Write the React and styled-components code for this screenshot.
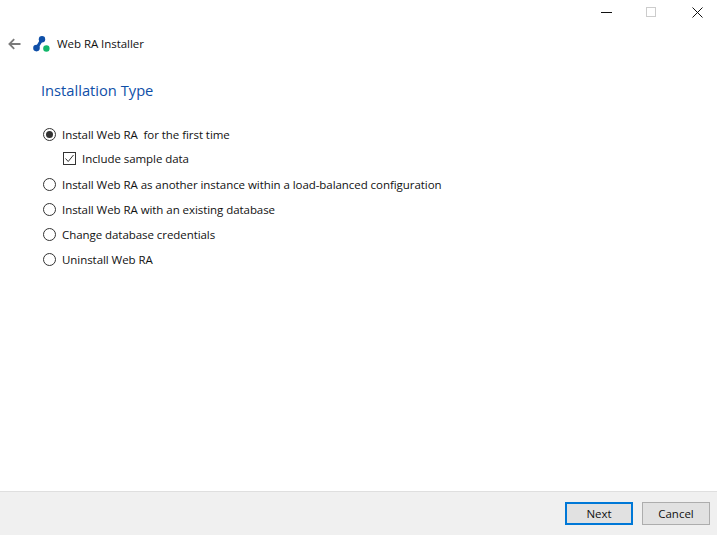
import React from "react";
import styled, { createGlobalStyle } from "styled-components";

const Global = createGlobalStyle`
  html, body { margin: 0; padding: 0; background: #fff; }
  body { font-family: "Open Sans", "Noto Sans", sans-serif; }
`;

const Windowed = styled.div`
  width: 717px; height: 535px; display: flex; flex-direction: column; overflow: hidden;
  background: #fff; color: #111;
`;
const Caption = styled.div`
  height: 25px; display: flex; justify-content: flex-end; align-items: flex-start;
  margin-right: -3px;
`;
const CaptionButton = styled.div`
  width: 45.5px; height: 25px; display: flex; align-items: center; justify-content: center;
  svg { display: block; }
`;
const Header = styled.div`
  height: 37px; display: flex; align-items: center; padding-left: 8px;
`;
const AppName = styled.span`
  font-size: 11.5px; margin-left: 7px; color: #111; letter-spacing: -0.05px;
`;
const Back = styled.svg`
  margin-right: 12px;
`;
const Content = styled.main`
  flex: 1; padding: 18px 0 0 41px; display: flex; flex-direction: column;
`;
const Title = styled.h1`
  margin: 0; font-size: 14.7px; font-weight: 400; color: #0f4fa8; line-height: 20px;
`;
const Options = styled.div`
  margin-top: 22px; margin-left: 2px; display: flex; flex-direction: column;
`;
const Row = styled.div`
  display: flex; align-items: center; font-size: 11.5px; color: #111;
  letter-spacing: -0.057px;
  height: ${p => (p.$nested ? "23px" : "25px")};
  margin-bottom: ${p => (p.$nested ? "2px" : "0")};
  padding-left: ${p => (p.$nested ? "20px" : "0")};
  white-space: pre;
`;
const Radio = styled.span`
  width: 13px; height: 13px; box-sizing: border-box; border: 1px solid #333; border-radius: 50%;
  margin-right: 6px; display: flex; align-items: center; justify-content: center; flex: none;
  &::after {
    content: ""; width: 7px; height: 7px; border-radius: 50%;
    background: ${p => (p.$on ? "#333" : "transparent")};
  }
`;
const Check = styled.span`
  width: 13px; height: 13px; box-sizing: border-box; border: 1px solid #333; margin-right: 6px; flex: none;
  display: flex; align-items: center; justify-content: center;
`;
const Footer = styled.footer`
  height: 44px; box-sizing: border-box; background: #f0f0f0; border-top: 1px solid #dfdfdf;
  display: flex; justify-content: flex-end; align-items: flex-start;
  padding: 10px 7px 0 0; gap: 9px;
`;
const Button = styled.button`
  width: 68px; height: 23px; box-sizing: border-box; padding: 0;
  background: #e1e1e1; font: 400 11.5px "Open Sans", sans-serif; color: #111;
  border: ${p => (p.$primary ? "2px solid #0078d7" : "1px solid #adadad")};
`;

const Logo = () => (
  <svg width="17" height="16" viewBox="0 0 17 16">
    <path d="M3.6 12.3 L9 3.3" stroke="#0f4fa8" strokeWidth="3" strokeLinecap="round" fill="none" />
    <circle cx="3.5" cy="12.1" r="3.3" fill="#0f4fa8" />
    <circle cx="9" cy="3.2" r="3.2" fill="#0f4fa8" />
    <circle cx="13.4" cy="12.5" r="3.2" fill="#12b76a" />
  </svg>
);

const options = [
  { label: "Install Web RA  for the first time", on: true },
  { label: "Include sample data", check: true },
  { label: "Install Web RA as another instance within a load-balanced configuration" },
  { label: "Install Web RA with an existing database" },
  { label: "Change database credentials" },
  { label: "Uninstall Web RA" },
];

export default function App() {
  return (
    <Windowed>
      <Global />
      <Caption>
        <CaptionButton>
          <svg width="11" height="11"><path d="M0 5.5H11" stroke="#111" /></svg>
        </CaptionButton>
        <CaptionButton>
          <svg width="11" height="11"><rect x="0.5" y="0.5" width="9" height="9" fill="none" stroke="#ccc" /></svg>
        </CaptionButton>
        <CaptionButton>
          <svg width="11" height="11"><path d="M0.5 0.5L10.5 10.5M10.5 0.5L0.5 10.5" stroke="#111" /></svg>
        </CaptionButton>
      </Caption>
      <Header>
        <Back width="13" height="12" viewBox="0 0 13 12">
          <path d="M12.5 6H1.5M6.2 1.2L1.4 6L6.2 10.8" stroke="#7a7a7a" strokeWidth="1.8" fill="none" />
        </Back>
        <Logo />
        <AppName>Web RA Installer</AppName>
      </Header>
      <Content>
        <Title>Installation Type</Title>
        <Options>
          {options.map(o => (
            <Row key={o.label} $nested={o.check}>
              {o.check ? (
                <Check>
                  <svg width="11" height="11" viewBox="0 0 11 11">
                    <path d="M1.5 5.5L4.2 8.5L9.5 2" stroke="#333" strokeWidth="1" fill="none" />
                  </svg>
                </Check>
              ) : (
                <Radio $on={o.on} />
              )}
              {o.label}
            </Row>
          ))}
        </Options>
      </Content>
      <Footer>
        <Button $primary>Next</Button>
        <Button>Cancel</Button>
      </Footer>
    </Windowed>
  );
}
